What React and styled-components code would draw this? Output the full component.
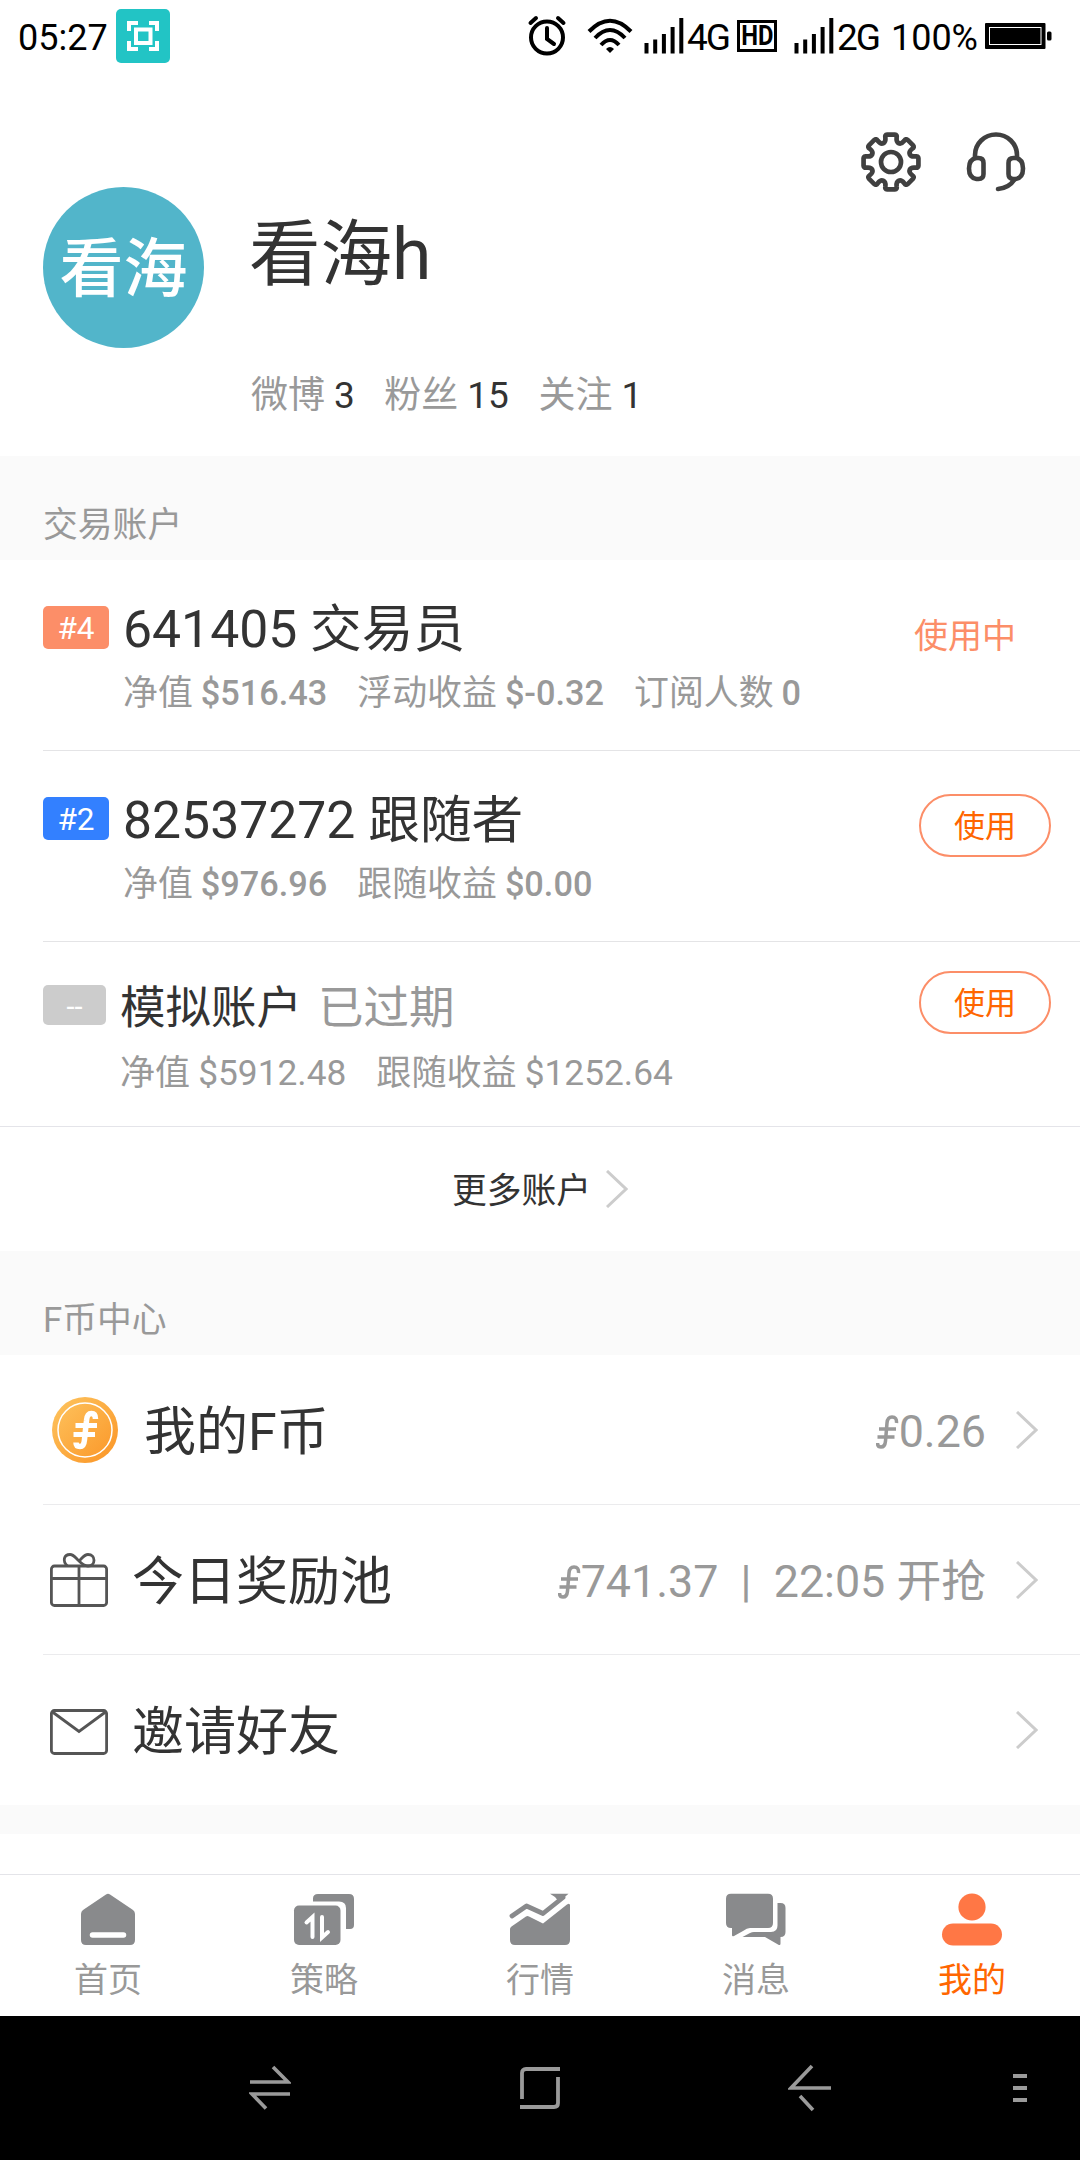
import React from "react";
import styled, { createGlobalStyle } from "styled-components";

const GlobalStyle = createGlobalStyle`
  * {
    box-sizing: border-box;
  }
  body {
    margin: 0;
    background: #fff;
    color: #333;
    font-family: Roboto, "Noto Sans CJK SC", sans-serif;
  }
  svg {
    display: block;
    flex: none;
  }
`;

const Screen = styled.div`
  width: 1080px;
  height: 2160px;
  display: flex;
  flex-direction: column;
  background: #fff;
  overflow: hidden;
`;

// Status bar
const StatusBar = styled.div`
  height: 76px;
  display: flex;
  align-items: center;
  padding: 0 28px 0 18px;
  color: #000;
  font-size: 36px;
  line-height: 76px;
`;

const CaptureBadge = styled.div`
  width: 54px;
  height: 54px;
  margin: 0 auto 4px 8px;
  border-radius: 5px;
  background: #22c4c5;
`;

const IconGroup = styled.div`
  display: flex;
  align-items: center;
  width: 525px;

  svg {
    margin-bottom: 4px;
  }
`;

const WifiSlot = styled.div`
  margin: 0 11px 0 20px;
`;

const Network = styled.div`
  width: 43px;
  margin-left: 3px;
  font-size: 37px;
  letter-spacing: -2px;
  white-space: nowrap;
`;

const HdBox = styled.div`
  width: 40px;
  height: 32px;
  margin: 0 17px 4px 7px;
  border: 3px solid #000;
  display: flex;
  align-items: center;
  justify-content: center;
  font-size: 27px;
  font-weight: 700;
  line-height: 26px;

  span {
    transform: scaleX(0.88);
  }
`;

const Percent = styled.div`
  margin: 0 7px 0 auto;
`;

// Profile
const Profile = styled.div`
  height: 380px;
  display: flex;
  padding: 56px 0 0 43px;
`;

const Avatar = styled.div`
  width: 161px;
  height: 161px;
  margin-top: 55px;
  border-radius: 50%;
  background: #52b5ca;
  color: #fff;
  font-size: 64px;
  font-weight: 500;
  line-height: 166px;
  text-align: center;
`;

const ProfileInfo = styled.div`
  margin: 79px 0 0 45px;
`;

const Name = styled.div`
  font-size: 71.5px;
  line-height: 88px;
`;

const Stats = styled.div`
  display: flex;
  gap: 29.5px;
  margin: 73px 0 0 2px;
  font-size: 37px;
  line-height: 48px;
  color: #999;

  b {
    margin-left: 9px;
    font-weight: 400;
    color: #333;
  }
`;

const ProfileActions = styled.div`
  display: flex;
  gap: 45px;
  margin: 0 54px 0 auto;
`;

// Sections
const SectionTitle = styled.div`
  height: 104px;
  padding: 45px 43px 0;
  background: #fafafa;
  color: #999;
  font-size: 34.8px;
  line-height: 48px;
`;

const Account = styled.div`
  height: ${(props) => (props.$expired ? 184 : 191)}px;
  margin-left: 43px;
  padding-right: 29px;
  display: flex;
  align-items: flex-start;
  border-bottom: ${(props) => (props.$expired ? "none" : "1px solid #e4e4e6")};
`;

const Rank = styled.div`
  width: ${(props) => (props.$small ? 63 : 66)}px;
  height: ${(props) => (props.$small ? 40 : 43)}px;
  margin-top: ${(props) => (props.$small ? 43 : 46)}px;
  border-radius: 5px;
  background: ${(props) => props.$color};
  color: #fff;
  font-size: ${(props) => (props.$small ? 29 : 31.5)}px;
  line-height: ${(props) => (props.$small ? 44 : 46)}px;
  text-align: center;
`;

const AccountInfo = styled.div`
  flex: 1;
  margin: ${(props) => (props.$expired ? 37 : 40)}px 0 0 14px;
`;

const AccountName = styled.div`
  font-size: ${(props) => (props.$expired ? 45.5 : 51.7)}px;
  line-height: 60px;
  white-space: nowrap;

  span {
    margin-left: 16px;
    color: #999;
  }
`;

const Figures = styled.div`
  display: flex;
  gap: 30px;
  margin-top: ${(props) => (props.$expired ? 10 : 9)}px;
  color: #999;
  font-size: ${(props) => (props.$expired ? 35.1 : 34.9)}px;
  line-height: 48px;
  white-space: nowrap;

  b {
    margin-left: 8px;
    font-size: ${(props) => (props.$expired ? 35.3 : 34.3)}px;
    font-weight: ${(props) => (props.$expired ? 400 : 500)};
  }
`;

const InUse = styled.div`
  margin: 52px 35px 0 0;
  color: #fc8e68;
  font-size: 34px;
  line-height: 48px;
`;

const UseButton = styled.button`
  width: 132px;
  height: 63px;
  margin-top: ${(props) => (props.$expired ? 29 : 43)}px;
  padding: 3px 0 0;
  border: 2px solid #fc8e68;
  border-radius: 32px;
  background: #fff;
  color: #ff6600;
  font: inherit;
  font-size: 31px;
  line-height: 54px;
`;

const MoreAccounts = styled.div`
  height: 125px;
  border-top: 1px solid #e4e4e9;
  display: flex;
  align-items: center;
  justify-content: center;
  gap: 15px;
  font-size: 34.8px;
  line-height: 48px;

  span {
    padding-top: 3px;
  }
`;

const MenuRow = styled.div`
  height: 150px;
  margin-left: 43px;
  padding-right: 42px;
  display: flex;
  align-items: center;
  border-bottom: ${(props) => (props.$last ? "none" : "1px solid #ebebed")};
`;

const MenuIcon = styled.div`
  margin: 0 ${(props) => props.$after}px 0 ${(props) => props.$before}px;
  padding-top: ${(props) => props.$drop || 0}px;
`;

const MenuLabel = styled.div`
  padding-top: 6px;
  font-size: 52px;
  line-height: 60px;
`;

const MenuValue = styled.div`
  display: flex;
  align-items: center;
  margin: 0 30px 0 auto;
  padding-top: 4px;
  color: #999;
  font-size: 44.8px;
  line-height: 60px;
  white-space: pre;
`;

const Spacer = styled.div`
  height: 29px;
  background: #fafafa;
`;

// Bottom bars
const TabBar = styled.div`
  height: 142px;
  margin-top: auto;
  border-top: 1px solid #e4e4e9;
  display: grid;
  grid-template-columns: repeat(5, 1fr);
`;

const Tab = styled.div`
  padding-top: 18px;
  display: flex;
  flex-direction: column;
  align-items: center;
  color: ${(props) => (props.$active ? "#ff6600" : "#999")};
  font-size: 34px;
  line-height: 48px;

  svg {
    margin-bottom: 10px;
    color: ${(props) => (props.$active ? "#ff7745" : "#898a8c")};
  }
`;

const SystemBar = styled.div`
  height: 144px;
  display: grid;
  grid-template-columns: 162px 216px 324px 216px 162px;
  align-items: center;
  justify-items: center;
  background: #000;
  color: #9a9a9a;
`;

const SystemKey = styled.div`
  grid-column: ${(props) => props.$column};
  justify-self: ${(props) => props.$align || "center"};
  margin-right: ${(props) => props.$right || 0}px;
`;

const Line = ({ w, h, size = 4, children, ...rest }) => (
  <svg
    width={w}
    height={h}
    viewBox={`0 0 ${w} ${h}`}
    fill="none"
    stroke="currentColor"
    strokeWidth={size}
    {...rest}
  >
    {children}
  </svg>
);

const CaptureIcon = () => (
  <Line w={54} h={54} stroke="#fff">
    <path d="M13 22v-8h9M33 14h8v8M41 32v8h-8M22 40h-9v-8" />
    <rect x="20" y="20.500" width="14.500" height="13.500" />
  </Line>
);

const AlarmIcon = () => (
  <Line w={40} h={42} strokeLinecap="round">
    <circle cx="20" cy="22.500" r="16" />
    <path d="M3.500 8L9 3M36.500 8L31 3M20 13v11l7 5" />
  </Line>
);

const WifiIcon = () => (
  <Line w={46} h={36}>
    <path d="M2 13.500Q23-8 44 13.500M8 20Q23 4 38 20M14 27Q23 17 32 27" />
    <path d="M19 31q4-4 8 0l-4 4z" fill="currentColor" stroke="none" />
  </Line>
);

const SignalIcon = () => (
  <Line w={40} h={36} size={4}>
    <path d="M2.500 35.500V25M11.200 35.500V21.500M19.900 35.500V16M28.600 35.500V9M37.300 35.500V0" />
  </Line>
);

const BatteryIcon = () => (
  <svg width="67" height="26" viewBox="0 0 67 26">
    <rect width="60.500" height="26" rx="1" />
    <rect x="4.500" y="4.500" width="51.500" height="17" fill="none" stroke="#fff" />
    <rect x="62" y="8.500" width="4.500" height="9" rx="1.500" />
  </svg>
);

// eight rounded teeth around the centre
const polar = (r, deg) => {
  const a = (deg * Math.PI) / 180;
  return `${(30 + r * Math.cos(a)).toFixed(2)} ${(30 + r * Math.sin(a)).toFixed(2)}`;
};
const gearPath =
  [0, 45, 90, 135, 180, 225, 270, 315]
    .map(
      (a, i) =>
        `${i ? "L" : "M"}${polar(25, a - 13)}Q${polar(28, a - 13)} ${polar(27.7, a - 8)}` +
        `L${polar(27.7, a + 8)}Q${polar(28, a + 13)} ${polar(25, a + 13)}` +
        `C${polar(19, a + 15)} ${polar(19, a + 30)} ${polar(25, a + 32)}`
    )
    .join("") + "Z";

const GearIcon = () => (
  <Line w={60} h={60} size={4.7} stroke="#404040" strokeLinejoin="round">
    <path d={gearPath} />
    <circle cx="30" cy="30" r="10" />
  </Line>
);

const HeadsetIcon = () => (
  <Line w={60} h={60} size={4.6} stroke="#404040" strokeLinecap="round">
    <path d="M9 25v-2a21 20.500 0 0 1 42 0v2" />
    <path d="M10.500 26h2q5 0 5 5v11q0 5-5 5h-2q-7.500-1-7.500-10.500T10.500 26zM49.500 26h-2q-5 0-5 5v11q0 5 5 5h2q7.500-1 7.500-10.500T49.500 26z" />
    <path d="M48.500 47.500Q43 56 32 57" />
  </Line>
);

const Chevron = () => (
  <Line w={22} h={38} size={3} stroke="#ccc">
    <path d="M1 1l19 18L1 37" />
  </Line>
);

const FMark = () => (
  <Line w={23} h={36} size={3.5}>
    <path d="M20.500 9q.5-6-4.500-6-4.500 0-5 6L9.500 27q-.5 6-4.500 6-3.500 0-3.500-4" />
    <path d="M3 15h17M1.500 23h17" />
  </Line>
);

const CoinIcon = () => (
  <svg width="66" height="66" viewBox="0 0 66 66" fill="none" stroke="#fff">
    <defs>
      <linearGradient id="coin" x1="0" y1="0" x2="1" y2="1">
        <stop offset="0.1" stopColor="#fdc05a" />
        <stop offset="0.9" stopColor="#fb992b" />
      </linearGradient>
    </defs>
    <circle cx="33" cy="33" r="33" fill="url(#coin)" stroke="none" />
    <circle cx="33" cy="33" r="27" strokeWidth="1.500" />
    <path
      d="M43.500 22q0-5.500-4-5.500-4.500 0-5 7l-2 19q-.5 7-4.500 7-4 0-4-4"
      strokeWidth="5.500"
    />
    <path d="M23.500 28.500h21.500M21.500 37.500h21.500" strokeWidth="5" />
  </svg>
);

const GiftIcon = () => (
  <Line w={58} h={54} size={2.8} stroke="#555">
    <rect x="1.400" y="13" width="55.200" height="39.500" rx="3" />
    <path d="M1.200 25.500h55.500M29 13v39.500M17.500 13C12 8 14 1.500 20 1.500c4 0 6 4 9 6.500 4 4 6 5 9 5 8 0 8-11.500 0-11.500-4 0-6 4-9 6.500" />
  </Line>
);

const MailIcon = () => (
  <Line w={58} h={46} size={2.8} stroke="#555">
    <rect x="1.400" y="1.500" width="55.200" height="43" rx="3" />
    <path d="M2.500 3L29 22.500 55.500 3" />
  </Line>
);

const TabIcon = ({ children }) => (
  <svg width="62" height="53" viewBox="0 0 62 53" fill="currentColor">
    {children}
  </svg>
);

const tabs = [
  {
    label: "首页",
    icon: (
      <>
        <path d="M29 1.500q2-1.500 4 0L56 17q2 1.500 2 4v26q0 5-5 5H9q-5 0-5-5V21q0-2.500 2-4z" />
        <path d="M15.500 42h31" stroke="#fff" strokeWidth="5.500" strokeLinecap="round" />
      </>
    ),
  },
  {
    label: "策略",
    icon: (
      <>
        <rect x="1" y="12.500" width="46.500" height="39.500" rx="5" />
        <path d="M20 8.500V5.500q0-4.500 5-4.500h31q5 0 5 5v26q0 4-4 4h-4V15q0-6.500-7-6.500z" />
        <path
          d="M13.500 29.500l6-5.500V44M29 24v20.500l6-5.500"
          fill="none"
          stroke="#fff"
          strokeWidth="4"
          strokeLinecap="round"
        />
      </>
    ),
  },
  {
    label: "行情",
    icon: (
      <>
        <path d="M1 36q0-1.500 1.500-2.500L17 23.500q1.500-1 3 0L34 30.500 58 11.500q3-2 3 1V47q0 5-5 5H6q-5 0-5-5z" />
        <path
          d="M3 23L17.500 13 34 20.500 54 4.500"
          fill="none"
          stroke="currentColor"
          strokeWidth="4.800"
          strokeLinecap="round"
          strokeLinejoin="round"
        />
        <path d="M41 .8h18.500L50 9l-4-5z" />
      </>
    ),
  },
  {
    label: "消息",
    icon: (
      <>
        <path d="M6 .8h37q5 0 5 5V30q0 5-5 5H25q-3 0-7 3l-9 5q-2 1-2-1v-7H6q-5 0-5-5V5.800q0-5 5-5z" />
        <path d="M52.500 10h3q5 0 5 5v24q0 5-5 5v6.500q0 2.500-2.500 1l-13-7.500H17.500l7.500-4q2-1 4-1h17q6.500 0 6.500-6.500z" />
      </>
    ),
  },
  {
    label: "我的",
    active: true,
    icon: (
      <>
        <circle cx="31" cy="14" r="13.600" />
        <rect x="1" y="30.500" width="60" height="22" rx="11" />
      </>
    ),
  },
];

const accounts = [
  {
    rank: "#4",
    color: "#fc8e68",
    name: "641405 交易员",
    inUse: true,
    figures: [
      ["净值", "$516.43"],
      ["浮动收益", "$-0.32"],
      ["订阅人数", "0"],
    ],
  },
  {
    rank: "#2",
    color: "#3380ff",
    name: "82537272 跟随者",
    figures: [
      ["净值", "$976.96"],
      ["跟随收益", "$0.00"],
    ],
  },
  {
    rank: "--",
    color: "#ccc",
    name: "模拟账户",
    expired: true,
    figures: [
      ["净值", "$5912.48"],
      ["跟随收益", "$1252.64"],
    ],
  },
];

const StatusIcons = () => (
  <IconGroup>
    <AlarmIcon />
    <WifiSlot>
      <WifiIcon />
    </WifiSlot>
    <SignalIcon />
    <Network>4G</Network>
    <HdBox>
      <span>HD</span>
    </HdBox>
    <SignalIcon />
    <Network>2G</Network>
    <Percent>100%</Percent>
    <BatteryIcon />
  </IconGroup>
);

const App = () => {
  return (
    <Screen>
      <GlobalStyle />
      <StatusBar>
        05:27
        <CaptureBadge>
          <CaptureIcon />
        </CaptureBadge>
        <StatusIcons />
      </StatusBar>

      <Profile>
        <Avatar>看海</Avatar>
        <ProfileInfo>
          <Name>看海h</Name>
          <Stats>
            <span>微博<b>3</b></span>
            <span>粉丝<b>15</b></span>
            <span>关注<b>1</b></span>
          </Stats>
        </ProfileInfo>
        <ProfileActions>
          <GearIcon />
          <HeadsetIcon />
        </ProfileActions>
      </Profile>

      <SectionTitle>交易账户</SectionTitle>
      {accounts.map((item) => (
        <Account key={item.name} $expired={item.expired}>
          <Rank $color={item.color} $small={item.expired}>{item.rank}</Rank>
          <AccountInfo $expired={item.expired}>
            <AccountName $expired={item.expired}>
              {item.name}
              {item.expired && <span>已过期</span>}
            </AccountName>
            <Figures $expired={item.expired}>
              {item.figures.map(([label, value]) => (
                <span key={label}>{label}<b>{value}</b></span>
              ))}
            </Figures>
          </AccountInfo>
          {item.inUse ? (
            <InUse>使用中</InUse>
          ) : (
            <UseButton $expired={item.expired}>使用</UseButton>
          )}
        </Account>
      ))}
      <MoreAccounts>
        <span>更多账户</span>
        <Chevron />
      </MoreAccounts>

      <SectionTitle>F币中心</SectionTitle>
      <MenuRow>
        <MenuIcon $before={9} $after={26}>
          <CoinIcon />
        </MenuIcon>
        <MenuLabel>我的F币</MenuLabel>
        <MenuValue>
          <FMark />0.26
        </MenuValue>
        <Chevron />
      </MenuRow>
      <MenuRow>
        <MenuIcon $before={7} $after={24} $drop={1}>
          <GiftIcon />
        </MenuIcon>
        <MenuLabel>今日奖励池</MenuLabel>
        <MenuValue>
          <FMark />741.37  |  22:05 开抢
        </MenuValue>
        <Chevron />
      </MenuRow>
      <MenuRow $last>
        <MenuIcon $before={7} $after={24} $drop={3}>
          <MailIcon />
        </MenuIcon>
        <MenuLabel>邀请好友</MenuLabel>
        <MenuValue />
        <Chevron />
      </MenuRow>
      <Spacer />

      <TabBar>
        {tabs.map((tab) => (
          <Tab key={tab.label} $active={tab.active}>
            <TabIcon>{tab.icon}</TabIcon>
            {tab.label}
          </Tab>
        ))}
      </TabBar>
      <SystemBar>
        <SystemKey $column={2}>
          <Line w={42} h={46} size={3.6}>
            <path d="M1 17h38L24 2M41 29H3l14 14.500" />
          </Line>
        </SystemKey>
        <SystemKey $column={3}>
          <Line w={42} h={44} size={3.8}>
            <path d="M41 3H7Q3 3 3 7v26M1 41h34q4 0 4-4V11" />
          </Line>
        </SystemKey>
        <SystemKey $column={4}>
          <Line w={44} h={48} size={3.6}>
            <path d="M43 24H3L24 2M12 32l13 14" />
          </Line>
        </SystemKey>
        <SystemKey $column={5} $align="end" $right={53}>
          <Line w={14} h={28}>
            <path d="M0 2h14M0 14h14M0 26h14" />
          </Line>
        </SystemKey>
      </SystemBar>
    </Screen>
  );
};

export default App;
